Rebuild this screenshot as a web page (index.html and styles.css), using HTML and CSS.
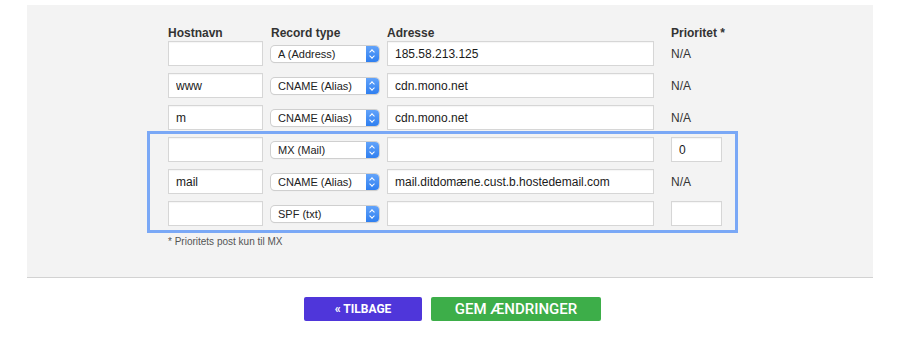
FILE: index.html
```html
<!DOCTYPE html>
<html lang="da">
<head>
    <meta charset="UTF-8">
    <title>DNS indstillinger</title>
    <link rel="stylesheet" href="styles.css">
</head>
<body>
    <div class="panel">
        <div class="group">
            <div class="row head">
                <div>Hostnavn</div>
                <div>Record type</div>
                <div>Adresse</div>
                <div class="prio">Prioritet *</div>
            </div>
            <div class="row">
                <input class="field" type="text" value="">
                <div class="select"><select><option>A (Address)</option></select><span class="stepper"></span></div>
                <input class="field" type="text" value="185.58.213.125">
                <div class="prio na">N/A</div>
            </div>
            <div class="row">
                <input class="field" type="text" value="www">
                <div class="select"><select><option>CNAME (Alias)</option></select><span class="stepper"></span></div>
                <input class="field" type="text" value="cdn.mono.net">
                <div class="prio na">N/A</div>
            </div>
            <div class="row">
                <input class="field" type="text" value="m">
                <div class="select"><select><option>CNAME (Alias)</option></select><span class="stepper"></span></div>
                <input class="field" type="text" value="cdn.mono.net">
                <div class="prio na">N/A</div>
            </div>
        </div>
        <div class="group highlight">
            <div class="row">
                <input class="field" type="text" value="">
                <div class="select"><select><option>MX (Mail)</option></select><span class="stepper"></span></div>
                <input class="field" type="text" value="">
                <input class="field prio" type="text" value="0">
            </div>
            <div class="row">
                <input class="field" type="text" value="mail">
                <div class="select"><select><option>CNAME (Alias)</option></select><span class="stepper"></span></div>
                <input class="field" type="text" value="mail.ditdomæne.cust.b.hostedemail.com">
                <div class="prio na">N/A</div>
            </div>
            <div class="row">
                <input class="field" type="text" value="">
                <div class="select"><select><option>SPF (txt)</option></select><span class="stepper"></span></div>
                <input class="field" type="text" value="">
                <input class="field prio" type="text" value="">
            </div>
        </div>
        <p class="note">* Prioritets post kun til MX</p>
    </div>

    <div class="actions">
        <button class="btn back">&laquo; TILBAGE</button>
        <button class="btn save">GEM ÆNDRINGER</button>
    </div>
</body>
</html>
```

FILE: styles.css
```css
* { box-sizing: border-box; margin: 0; padding: 0; }
body { background: #fff; font-family: "Liberation Sans", Arial, sans-serif; color: #222; }

.panel { margin: 5px 27px 0; padding: 21px 0 29px; background: #f3f3f3; border-bottom: 1px solid #d2d2d2; }

.group { margin-left: 120px; width: 591px; border: 3px solid transparent; border-top-width: 0; border-bottom-width: 0; padding: 0 13px 1px 18px; }
.group.highlight { border: 3px solid #7aa8f6; padding: 3px 13px 4px 18px; }

.row { display: grid; grid-template-columns: 95px 108px 267px 51px; column-gap: 8px; align-items: center; height: 25px; margin-bottom: 7px; }
.row:last-child { margin-bottom: 0; }
.row.head { height: 15px; margin-bottom: 0; font-size: 12px; font-weight: bold; line-height: 15px; color: #333; white-space: nowrap; }
.prio { margin-left: 9px; }
.na { font-size: 12px; color: #333; }

.field { width: 100%; height: 25px; border: 1px solid #d6d6d6; background: #fff; box-shadow: inset 0 1px 1px rgba(0, 0, 0, 0.04); padding: 0 7px; font-family: inherit; font-size: 12px; color: #1a1a1a; outline: none; }
.field.prio { width: 51px; margin-left: 9px; }

.select { display: flex; height: 16px; border-radius: 4px; background: #fff; box-shadow: 0 0 0 1px #cfcfcf, 0 1px 1px rgba(0, 0, 0, 0.15); overflow: hidden; }
.select select { flex: 1; -webkit-appearance: none; appearance: none; border: none; background: transparent; padding: 0 0 0 7px; font-family: inherit; font-size: 11px; color: #222; outline: none; height: 16px; line-height: 16px; }
.stepper { width: 13px; background: linear-gradient(#62a3fa, #2f7ff0); position: relative; }
.stepper::before, .stepper::after { content: ""; position: absolute; left: 4px; width: 3px; height: 3px; border: solid #fff; border-width: 1px 0 0 1px; }
.stepper::before { top: 4px; transform: rotate(45deg); }
.stepper::after { bottom: 4px; transform: rotate(225deg); }

.note { margin: 3px 0 0 141px; font-size: 10px; line-height: 12px; color: #555; }

.actions { display: flex; justify-content: center; gap: 9px; margin-top: 19px; padding-left: 5px; }
.btn { height: 24px; border: none; border-radius: 2px; color: #fff; font-family: Roboto, "Liberation Sans", sans-serif; cursor: pointer; }
.back { width: 118px; background: #4f36da; font-size: 12px; font-weight: bold; }
.save { width: 170px; background: #3dae49; font-size: 15px; font-weight: 500; }
```
